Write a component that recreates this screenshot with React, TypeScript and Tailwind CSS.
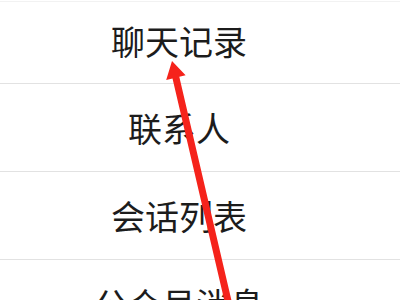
const items = ['聊天记录', '联系人', '会话列表', '公众号消息'];

export default function App() {
  return (
    <div className="relative w-[400px] h-[300px] overflow-hidden bg-white font-['Noto_Sans_CJK_SC','Noto_Sans',sans-serif]">
      <div className="h-[2px] border-b border-[#f2f2f2]" />
      <ul>
        {items.map((label, i) => (
          <li
            key={label}
            className={`flex items-center justify-center border-b border-[#e2e2e2] pr-[42px] text-[34px] leading-none text-[#1c1c1c] ${
              i === 0 ? 'h-[82px] pb-1' : 'h-[88px]'
            }`}
          >
            {label}
          </li>
        ))}
      </ul>

      {/* red annotation arrow */}
      <svg className="absolute inset-0 pointer-events-none" width="400" height="300" viewBox="0 0 400 300">
        <polygon
          fill="#f5231b"
          points="172,61 185.6,75.3 179.3,76.8 235.4,317.2 228.6,318.8 172.5,78.4 166.2,79.9"
        />
      </svg>
    </div>
  );
}
